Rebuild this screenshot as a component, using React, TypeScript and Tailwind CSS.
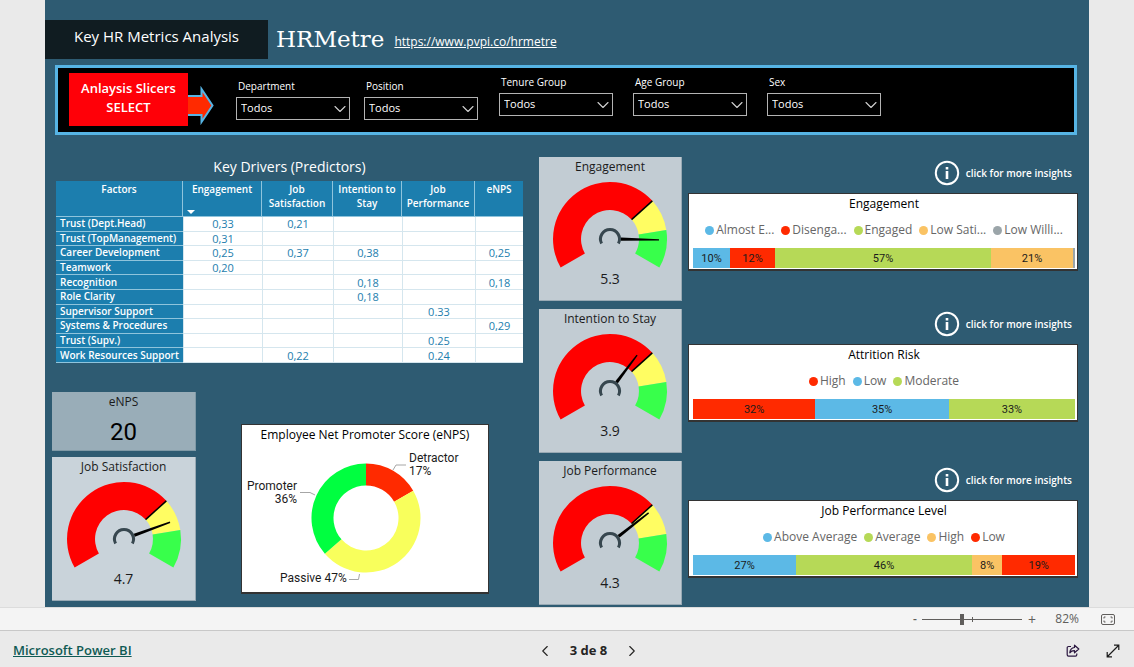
import { useState } from "react";
import { ChevronDown, ChevronLeft, ChevronRight } from "lucide-react";

type Segment = { label: string; value: number; color: string; size: number };

const BLUE = "#5cb9e6";
const RED = "#ff2a00";
const GREEN = "#b6d957";
const ORANGE = "#fac364";
const GRAY = "#9ba5a9";

const slicerGroups = [
  { className: "flex gap-3.5 pt-2.5", items: ["Department", "Position"] },
  { className: "flex gap-5 pt-1.5", items: ["Tenure Group", "Age Group", "Sex"] },
];

const drivers = [
  ["Trust (Dept.Head)", "0,33", "0,21", "", "", ""],
  ["Trust (TopManagement)", "0,31", "", "", "", ""],
  ["Career Development", "0,25", "0,37", "0,38", "", "0,25"],
  ["Teamwork", "0,20", "", "", "", ""],
  ["Recognition", "", "", "0,18", "", "0,18"],
  ["Role Clarity", "", "", "0,18", "", ""],
  ["Supervisor Support", "", "", "", "0.33", ""],
  ["Systems & Procedures", "", "", "", "", "0,29"],
  ["Trust (Supv.)", "", "", "", "0.25", ""],
  ["Work Resources Support", "", "0,22", "", "0.24", ""],
];

const columns = [
  { name: "Factors", width: "w-[127px]" },
  { name: "Engagement", width: "w-[79px]" },
  { name: "Job Satisfaction", width: "w-[71px]" },
  { name: "Intention to Stay", width: "w-[69px]" },
  { name: "Job Performance", width: "w-[73px]" },
  { name: "eNPS", width: "w-[48px]" },
];

const engagement: Segment[] = [
  { label: "Almost E...", value: 10, color: BLUE, size: 37 },
  { label: "Disenga...", value: 12, color: RED, size: 45 },
  { label: "Engaged", value: 57, color: GREEN, size: 216 },
  { label: "Low Sati...", value: 21, color: ORANGE, size: 82 },
  { label: "Low Willi...", value: 0, color: GRAY, size: 2 },
];

const attrition: Segment[] = [
  { label: "High", value: 32, color: RED, size: 32 },
  { label: "Low", value: 35, color: BLUE, size: 35 },
  { label: "Moderate", value: 33, color: GREEN, size: 33 },
];

const performance: Segment[] = [
  { label: "Above Average", value: 27, color: BLUE, size: 27 },
  { label: "Average", value: 46, color: GREEN, size: 46 },
  { label: "High", value: 8, color: ORANGE, size: 8 },
  { label: "Low", value: 19, color: RED, size: 19 },
];

// angle is in degrees, clockwise from twelve o'clock
const point = (r: number, angle: number) => {
  const rad = ((angle - 90) * Math.PI) / 180;
  return `${(r * Math.cos(rad)).toFixed(2)} ${(r * Math.sin(rad)).toFixed(2)}`;
};

const ring = (outer: number, inner: number, from: number, to: number) => {
  const large = to - from > 180 ? 1 : 0;
  return `M${point(outer, from)} A${outer} ${outer} 0 ${large} 1 ${point(outer, to)} L${point(inner, to)} A${inner} ${inner} 0 ${large} 0 ${point(inner, from)}Z`;
};

const Slicer = ({ label }: { label: string }) => {
  const id = label.toLowerCase().replace(" ", "-");
  return (
    <div className="w-[114px]">
      <label htmlFor={id} className="block pl-0.5 text-[10px] leading-4 font-medium">
        {label}
      </label>
      <div className="relative mt-[3px]">
        <select
          id={id}
          className="block h-[23px] w-full appearance-none border border-[#b3b3b3] bg-black pl-1 text-[11px] font-medium text-white"
        >
          <option>Todos</option>
        </select>
        <ChevronDown
          size={20}
          strokeWidth={1.3}
          className="pointer-events-none absolute top-0.5 right-0 text-[#d0d0d0]"
        />
      </div>
    </div>
  );
};

const Gauge = ({
  title,
  value,
  angle,
  length = 45,
  className = "bg-[#c2ccd3]",
}: {
  title: string;
  value: string;
  angle: number;
  length?: number;
  className?: string;
}) => (
  <section
    className={`flex h-36 flex-col items-center border-r border-b border-[#98a9b4] text-[#1b1b1b] ${className}`}
  >
    <h3 className="text-[12px] leading-5">{title}</h3>
    <svg viewBox="-60 -62 120 94" className="h-[94px] w-[120px]">
      <path d={ring(57, 29, -120, 48)} fill="#ff0000" />
      <path d={ring(57, 29, 48, 81)} fill="#fffd62" />
      <path d={ring(57, 29, 81, 120)} fill="#38ff4b" />
      <path
        d={`M${point(29, 48)} L${point(57, 48)}`}
        stroke="#000"
        strokeWidth="1.5"
      />
      <path
        d={`M${point(9.5, -118)} A9.5 9.5 0 1 1 ${point(9.5, 118)}`}
        fill="none"
        stroke="#37474f"
        strokeWidth="3"
      />
      <path
        d={`M-1.6 -11 L1.6 -11 L0.7 ${-length - 4} L-0.7 ${-length - 4}Z`}
        transform={`rotate(${angle})`}
        fill="#000"
      />
    </svg>
    <p className="text-[14px] leading-4">{value}</p>
  </section>
);

const Insights = () => (
  <button className="flex h-[26px] items-center gap-1.5 self-end pr-1.5 text-[10px] font-semibold text-white">
    <svg viewBox="0 0 26 26" className="size-[26px]">
      <circle cx="13" cy="13" r="11.2" fill="none" stroke="#fff" strokeWidth="2" />
      <path d="M11.7 7h2.6v2.4h-2.6zM11.7 11h2.6v8h-2.6z" fill="#fff" />
    </svg>
    click for more insights
  </button>
);

const StackedBar = ({ title, data }: { title: string; data: Segment[] }) => (
  <section className="h-[78px] border border-b-2 border-[#333] bg-white pr-0.5 pl-1">
    <h3 className="text-center text-[12px] leading-5 text-black">{title}</h3>
    <ul className="mb-0.5 flex h-8 items-center justify-center gap-[7px] text-[12px] whitespace-nowrap text-[#666]">
      {data.map((d) => (
        <li key={d.label} className="flex items-center gap-0.5">
          <span className="size-[9px] rounded-full" style={{ backgroundColor: d.color }} />
          {d.label}
        </li>
      ))}
    </ul>
    <div className="flex h-5 font-[Roboto] text-[11px] leading-[21px] text-[#1b1b1b]">
      {data.map((d) => (
        <div
          key={d.label}
          className="basis-0 text-center"
          style={{ flexGrow: d.size, backgroundColor: d.color }}
        >
          {d.value > 0 && `${d.value}%`}
        </div>
      ))}
    </div>
  </section>
);

const DriversTable = () => (
  <table className="h-[182px] w-full table-fixed border-separate border-spacing-0 text-[11px] leading-[14px]">
    <thead>
      <tr className="h-9 bg-[#1c7eae] text-[10px] text-white">
        {columns.map((c, i) => (
          <th
            key={c.name}
            scope="col"
            className={`relative border-b border-[#8fc4dc] p-0 pt-px align-top font-semibold not-last:border-r ${c.width}`}
          >
            {c.name}
            {i === 1 && (
              <svg viewBox="0 0 8 4" className="absolute bottom-0.5 left-1 h-1 w-2">
                <path d="M0 0h8L4 4z" fill="#fff" />
              </svg>
            )}
          </th>
        ))}
      </tr>
    </thead>
    <tbody>
      {drivers.map(([factor, ...values]) => (
        <tr key={factor}>
          <th
            scope="row"
            className="border-b border-[#8fc4dc] bg-[#1c7eae] p-0 pl-1 text-left text-[10px] leading-[13px] font-semibold whitespace-nowrap text-white"
          >
            {factor}
          </th>
          {values.map((v, i) => (
            <td
              key={i}
              className="border-b border-l border-[#d5e6ee] bg-white p-0 text-center leading-[13px] text-[#1c7eae]"
            >
              {v}
            </td>
          ))}
        </tr>
      ))}
    </tbody>
  </table>
);

const PromoterDonut = () => (
  <section className="mt-8 h-[170px] w-[248px] border border-b-2 border-[#333] bg-white">
    <h3 className="text-center text-[12px] leading-5 text-black">
      Employee Net Promoter Score (eNPS)
    </h3>
    <svg viewBox="0 0 246 147" className="w-full font-[Roboto] text-[12px]">
      <g transform="translate(124 73)">
        <path d={ring(54.5, 32.5, 0, 60)} fill="#ff2a00" />
        <path d={ring(54.5, 32.5, 60, 229)} fill="#f8ff5c" />
        <path d={ring(54.5, 32.5, 229, 360)} fill="#00ff40" />
      </g>
      <g fill="none" stroke="#a6a6a6">
        <path d="M151 25L154 20H164" />
        <path d="M73 50L68 47.5H58" />
        <path d="M117.500 129L116.500 134.500H107" />
      </g>
      <g fill="#1b1b1b">
        <text x="167" y="17">Detractor</text>
        <text x="167" y="30">17%</text>
        <text x="55" y="45" textAnchor="end">Promoter</text>
        <text x="55" y="58" textAnchor="end">36%</text>
        <text x="38" y="137">Passive 47%</text>
      </g>
    </svg>
  </section>
);

const ZoomBar = () => {
  const [zoom, setZoom] = useState(82);

  return (
    <div className="flex h-6 items-center justify-end border-y border-t-[#dcdcdc] border-b-[#c8c8c8] bg-[#f4f4f4] pr-[19px] text-[12px] text-[#605e5c]">
      <button aria-label="Zoom out" className="w-3.5 text-center font-semibold">
        -
      </button>
      <div className="relative flex h-3 w-[100px] items-center">
        <input
          type="range"
          aria-label="Zoom"
          min={10}
          max={190}
          value={zoom}
          onChange={(e) => setZoom(Number(e.target.value))}
          className="h-px w-full appearance-none bg-[#605e5c] [&::-webkit-slider-thumb]:h-[11px] [&::-webkit-slider-thumb]:w-1 [&::-webkit-slider-thumb]:appearance-none [&::-webkit-slider-thumb]:bg-[#605e5c]"
        />
        <span className="pointer-events-none absolute left-1/2 h-[5px] w-px bg-[#605e5c]" />
      </div>
      <button aria-label="Zoom in" className="w-5 text-center text-[14px]">
        +
      </button>
      <span className="w-[37px] text-right">{zoom}%</span>
      <button aria-label="Fit to page" className="ml-[22px]">
        <svg viewBox="0 0 14 11" className="h-[11px] w-3.5" fill="none" stroke="#605e5c">
          <rect x="0.500" y="0.500" width="13" height="10" rx="1.500" />
          <path d="M3 4.500V3h1.500M9.500 3H11v1.500M11 6.500V8H9.500M4.500 8H3V6.500" />
        </svg>
      </button>
    </div>
  );
};

const Footer = () => (
  <footer className="grid h-9 grid-cols-3 items-center bg-[#eaeaea] pt-[3px] pr-3.5 pl-[13px]">
    <a href="https://powerbi.microsoft.com" className="text-[13px] font-semibold text-[#0f5a54] underline">
      Microsoft Power BI
    </a>
    <nav className="flex items-center justify-center gap-4 pl-11 text-[13px] font-bold text-[#252423]">
      <button aria-label="Previous page">
        <ChevronLeft size={18} strokeWidth={1.5} />
      </button>
      <span>3 de 8</span>
      <button aria-label="Next page">
        <ChevronRight size={18} strokeWidth={1.5} />
      </button>
    </nav>
    <div className="flex items-center justify-end gap-[26px]">
      <button aria-label="Share">
        <svg viewBox="0 0 14 14" className="size-3.5" fill="none" stroke="#2b1740" strokeWidth="1.200">
          <path d="M5 2.500H2.500a1.300 1.300 0 0 0-1.300 1.300v7a1.300 1.300 0 0 0 1.300 1.300h7a1.300 1.300 0 0 0 1.300-1.300V9.500" />
          <path d="M8.500 1.200L12.800 5 8.500 8.800V6.600C6.300 6.500 4.900 7.200 3.800 8.800 4 5.800 5.500 3.800 8.500 3.500z" strokeLinejoin="round" />
        </svg>
      </button>
      <button aria-label="Full screen">
        <svg viewBox="0 0 14 14" className="size-3.5" fill="none" stroke="#1b1b1b" strokeWidth="1.200">
          <path d="M1.500 12.500l11-11M8 1.200h4.800V6M6 12.800H1.200V8" />
        </svg>
      </button>
    </div>
  </footer>
);

const App = () => {
  return (
    <div className="min-h-screen bg-[#eaeaea] font-['Open_Sans',sans-serif]">
      <main className="mx-[45px] bg-[#2e5b72] pt-5 pb-0.5">
        {/* HEADER */}
        <header className="flex h-[39px] items-center text-white">
          <h1 className="mr-2 h-full w-[223px] bg-[#101c21] text-center text-[15px] leading-[33px] font-medium">
            Key HR Metrics Analysis
          </h1>
          <span className="mr-2.5 font-['DejaVu_Serif',serif] text-[23px]">HRMetre</span>
          <a href="https://www.pvpi.co/hrmetre" className="pt-1 text-[12px] underline">
            https://www.pvpi.co/hrmetre
          </a>
        </header>

        {/* SLICERS */}
        <section className="mt-1.5 mr-3 ml-2.5 flex h-[70px] border-3 border-[#56b4e4] bg-black pl-[11px] text-white">
          <div className="mt-[5px] h-[53px] w-[119px] bg-[#ff0008] pt-1.5 text-center text-[13px] leading-[19px] font-semibold">
            Anlaysis Slicers
            <br />
            SELECT
          </div>
          <svg viewBox="0 0 26 40" className="mt-[18px] mr-[22px] h-10 w-[26px]">
            <path
              d="M-3 10H13.500V3L24.500 19.500L13.500 36V29H-3z"
              fill="#ff2a00"
              stroke="#56b4e4"
              strokeWidth="2"
            />
          </svg>
          <div className="flex gap-[21px]">
            {slicerGroups.map((group) => (
              <div key={group.items[0]} className={group.className}>
                {group.items.map((label) => (
                  <Slicer key={label} label={label} />
                ))}
              </div>
            ))}
          </div>
        </section>

        {/* VISUALS */}
        <div className="grid grid-cols-[481fr_143fr_390fr] gap-1.5 pt-[22px] pr-[11px] pl-[7px]">
          <div className="pr-2.5">
            <div className="pl-1">
              <h2 className="mb-1 text-center text-[14px] leading-5 text-white">
                Key Drivers (Predictors)
              </h2>
              <DriversTable />
            </div>
            <div className="mt-[29px] flex gap-[45px]">
              <div className="flex w-36 flex-col gap-1.5">
                <section className="h-[59px] border-r border-b border-[#7f99a6] bg-[#99adb8] text-center text-[#1b1b1b]">
                  <h3 className="text-[12px] leading-5">eNPS</h3>
                  <p className="pt-1 font-[Roboto] text-[24px] leading-8 text-black">20</p>
                </section>
                <Gauge title="Job Satisfaction" value="4.7" angle={70} className="bg-[#c9d3da]" />
              </div>
              <PromoterDonut />
            </div>
          </div>

          <div className="flex flex-col gap-2">
            <Gauge title="Engagement" value="5.3" angle={91} />
            <Gauge title="Intention to Stay" value="3.9" angle={37} length={41} />
            <Gauge title="Job Performance" value="4.3" angle={52} />
          </div>

          <div className="flex flex-col pt-[3px]">
            <div className="mb-10 flex flex-col gap-[7px]">
              <Insights />
              <StackedBar title="Engagement" data={engagement} />
            </div>
            <div className="mb-[45px] flex flex-col gap-[7px]">
              <Insights />
              <StackedBar title="Attrition Risk" data={attrition} />
            </div>
            <div className="flex flex-col gap-[7px]">
              <Insights />
              <StackedBar title="Job Performance Level" data={performance} />
            </div>
          </div>
        </div>
      </main>
      <ZoomBar />
      <Footer />
    </div>
  );
};

export default App;
